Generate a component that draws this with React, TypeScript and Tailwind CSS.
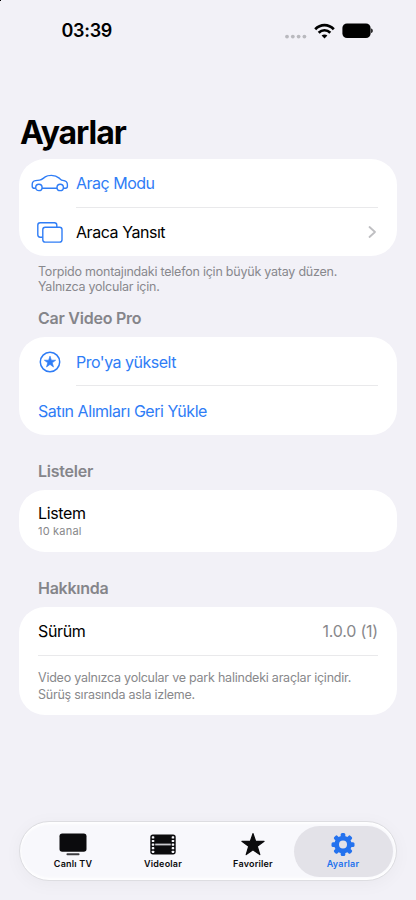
import React, { useState } from 'react';

function CarIcon() {
  return (
    <svg width="38" height="18" viewBox="0 0 38 18" fill="none" stroke="#2f7df6" strokeWidth="1.4" strokeLinejoin="round" strokeLinecap="round">
      <path d="M4.4 14.3H3.4C2 14.3 1.2 13.6 1.2 12.2V10.4C1.2 8.2 2.3 6.9 4.5 6.6L8.6 6.1C11 5.8 12.2 4.2 14.2 2.9C15.6 1.9 17.2 1.4 20.4 1.4C24.6 1.4 26.4 2.6 28.6 4.4C29.6 5.3 30.2 6.2 31.8 6.4C35 6.8 36.4 7.9 36.4 10.6V12.3C36.4 13.6 35.7 14.3 34.5 14.3H32.7M25.7 14.3H11.4" />
      <circle cx="7.9" cy="13.4" r="3.2" />
      <circle cx="29.2" cy="13.4" r="3.2" />
    </svg>
  );
}

function MirrorIcon() {
  return (
    <svg width="26" height="21" viewBox="0 0 26 21" fill="none" stroke="#2f7df6" strokeWidth="1.4">
      <path d="M5.7 15.2H3.2C1.7 15.2 .8 14.3 .8 12.8V3.2C.8 1.7 1.7 .8 3.2 .8H17.4C18.9 .8 19.8 1.7 19.8 3.2V5.2" />
      <rect x="5.8" y="5.2" width="19.2" height="14.9" rx="2.4" />
    </svg>
  );
}

function StarCircleIcon() {
  return (
    <svg width="22" height="22" viewBox="0 0 22 22">
      <circle cx="11" cy="11" r="9.7" fill="none" stroke="#2f7df6" strokeWidth="1.5" />
      <path d="M11 5.1L12.4 9.2H16.7L13.3 11.8L14.5 16L11 13.5L7.5 16L8.7 11.8L5.3 9.2H9.6Z" fill="#2f7df6" stroke="#2f7df6" strokeWidth=".6" strokeLinejoin="round" />
    </svg>
  );
}

function TvIcon() {
  return (
    <svg width="28" height="24" viewBox="0 0 28 24" fill="#0b0b0d">
      <rect x=".5" y=".5" width="27" height="18.3" rx="2.8" />
      <rect x="7.5" y="20.3" width="13" height="2" rx=".8" fill="#3c3c40" />
    </svg>
  );
}

function FilmIcon() {
  return (
    <svg width="26" height="24" viewBox="0 0 26 24">
      <rect x=".3" y="1.4" width="25.4" height="20" rx="2.6" fill="#0b0b0d" />
      <rect x="5.2" y="10.6" width="15.6" height="1.8" fill="#c9c9ce" />
      {[3.3, 6.9, 10.5, 14.1, 17.7].map(y => (
        <g key={y} fill="#f7f7fb">
          <rect x="1.8" y={y} width="2.5" height="2.2" rx=".6" />
          <rect x="21.7" y={y} width="2.5" height="2.2" rx=".6" />
        </g>
      ))}
    </svg>
  );
}

function StarIcon() {
  return (
    <svg width="26" height="24" viewBox="0 0 26 24">
      <path d="M13 .6L15.6 8.3H24.1L17.3 13.3L19.8 21.6L13 16.8L6.2 21.6L8.7 13.3L1.9 8.3H10.4Z" fill="#0b0b0d" stroke="#0b0b0d" strokeWidth="1.2" strokeLinejoin="round" />
    </svg>
  );
}

function GearIcon() {
  return (
    <svg width="24" height="24" viewBox="0 0 24 24">
      <circle cx="12" cy="11.6" r="6.4" fill="none" stroke="#2472ee" strokeWidth="4.8" />
      {[0, 45, 90, 135, 180, 225, 270, 315].map(a => (
        <rect key={a} x="9.7" y=".1" width="4.6" height="5" rx="1.5" fill="#2472ee" transform={`rotate(${a} 12 11.6)`} />
      ))}
    </svg>
  );
}

function StatusBar() {
  return (
    <div className="relative flex h-[61px] items-center justify-between pl-[61.5px] pr-[43.5px]">
      <div className="absolute left-0 top-0 h-px w-px bg-black" />
      <span className="text-[18px] font-semibold leading-none tracking-[-0.3px]">03:39</span>
      <div className="flex items-center">
        <svg width="22" height="16" viewBox="0 0 22 16" fill="#b9b9be">
          {[2, 7.8, 13.6, 19.4].map(x => <circle key={x} cx={x} cy="13.6" r="1.9" />)}
        </svg>
        <svg className="ml-[7px]" width="21" height="16" viewBox="0 0 21 16" fill="none" stroke="#000" strokeWidth="2.7">
          <path d="M1.2 6.2C6.5 .7 14.5 .7 19.8 6.2" />
          <path d="M4.7 9.7C8 6.4 13 6.4 16.3 9.7" />
          <path d="M10.5 15.4L7.6 12.5C9.3 11 11.7 11 13.4 12.5Z" fill="#000" stroke="none" />
        </svg>
        <svg className="ml-[7px]" width="31" height="16" viewBox="0 0 31 16">
          <rect x=".4" y=".5" width="28.2" height="14.6" rx="4.6" />
          <path d="M29.2 5.6C31.2 6.2 31.2 9.5 29.2 10.1Z" />
        </svg>
      </div>
    </div>
  );
}

function SectionTitle({ children, className }: { children: React.ReactNode; className: string }) {
  return (
    <h2 className={`pl-[19px] text-[16px] font-semibold leading-5 tracking-[-0.25px] text-[#85858a] ${className}`}>{children}</h2>
  );
}

function Card({ children }: { children: React.ReactNode }) {
  return <div className="overflow-hidden rounded-[26px] bg-white">{children}</div>;
}

const tabs = [
  { label: 'Canlı TV', icon: TvIcon },
  { label: 'Videolar', icon: FilmIcon },
  { label: 'Favoriler', icon: StarIcon },
  { label: 'Ayarlar', icon: GearIcon },
];

export default function App() {
  const [activeTab, setActiveTab] = useState('Ayarlar');

  return (
    <div className="flex h-[900px] w-[416px] flex-col overflow-hidden bg-[#f2f1f7] font-['Inter','Liberation_Sans',sans-serif] text-black">
      <StatusBar />

      <main className="flex-1 pl-[19px] pr-[19px] pt-[52px]">
        <h1 className="h-[46px] pl-px text-[32px] font-bold leading-[39px] tracking-[-1.05px]">Ayarlar</h1>

        <Card>
          <button className="flex h-12 w-full items-center text-left">
            <span className="flex w-[57px] items-center pl-[11.5px]"><CarIcon /></span>
            <span className="text-[16px] tracking-[-0.5px] text-[#2f7df6]">Araç Modu</span>
          </button>
          <div className="ml-[57px] mr-[19px] h-px bg-[#e9e9eb]" />
          <button className="flex h-12 w-full items-center text-left">
            <span className="flex w-[57px] items-center pl-[17.5px]"><MirrorIcon /></span>
            <span className="flex-1 text-[16px] tracking-[-0.45px]">Araca Yansıt</span>
            <svg className="mr-[20px]" width="9" height="14" viewBox="0 0 9 14" fill="none" stroke="#bfbfc2" strokeWidth="1.8" strokeLinecap="round" strokeLinejoin="round">
              <path d="M1.5 2L7 7L1.5 12" />
            </svg>
          </button>
        </Card>
        <p className="mt-[8px] pl-[19px] text-[12.5px] leading-[15px] tracking-[-0.23px] text-[#88888d]">
          Torpido montajındaki telefon için büyük yatay düzen.
          <br />
          Yalnızca yolcular için.
        </p>

        <SectionTitle className="mt-[14px]">Car Video Pro</SectionTitle>
        <div className="h-[9px]" />
        <Card>
          <button className="flex h-12 w-full items-center pt-px text-left">
            <span className="flex w-[57px] items-center pl-[19.5px]"><StarCircleIcon /></span>
            <span className="text-[16px] tracking-[-0.5px] text-[#2f7df6]">Pro'ya yükselt</span>
          </button>
          <div className="ml-[57px] mr-[19px] h-px bg-[#e9e9eb]" />
          <button className="flex h-[49px] w-full items-center pl-[19px] text-left text-[16px] tracking-[-0.45px] text-[#2f7df6]">
            Satın Alımları Geri Yükle
          </button>
        </Card>

        <SectionTitle className="mt-[26px]">Listeler</SectionTitle>
        <div className="h-[9px]" />
        <Card>
          <div className="h-[62px] pl-[19px] pt-[13px]">
            <div className="text-[16px] leading-5 tracking-[-0.35px]">Listem</div>
            <div className="text-[11px] leading-4 tracking-[0.2px] text-[#88888b]">10 kanal</div>
          </div>
        </Card>

        <SectionTitle className="mt-[26px]">Hakkında</SectionTitle>
        <div className="h-[9px]" />
        <Card>
          <div className="flex h-12 items-center justify-between px-[19px] text-[16px] tracking-[-0.35px]">
            <span>Sürüm</span>
            <span className="tracking-[-0.2px] text-[#88888b]">1.0.0 (1)</span>
          </div>
          <div className="mx-[19px] h-px bg-[#e9e9eb]" />
          <p className="h-[59px] pl-[19px] pt-[13px] text-[12.5px] leading-[17px] tracking-[-0.23px] text-[#88888b]">
            Video yalnızca yolcular ve park halindeki araçlar içindir.
            <br />
            Sürüş sırasında asla izleme.
          </p>
        </Card>
      </main>

      <nav className="mx-[19px] mb-[19px] flex h-[60px] items-center rounded-full border border-[#dddde1] bg-[#f8f8fc] px-[3.5px] shadow-[0_3px_18px_rgba(0,0,0,0.04),inset_0_2px_3px_#fff,inset_0_-2px_3px_#fff]">
        {tabs.map(({ label, icon: Icon }) => (
          <button
            key={label}
            onClick={() => setActiveTab(label)}
            className={`-mr-[9px] flex h-[51px] w-[99px] shrink-0 flex-col items-center rounded-full pt-[7px] ${
              activeTab === label ? 'bg-[#e3e2e8] text-[#2472ee]' : 'text-[#0b0b0d]'
            }`}
          >
            <Icon />
            <span className="mt-[1.5px] text-[9px] font-semibold leading-3 tracking-[0.2px]">{label}</span>
          </button>
        ))}
      </nav>
    </div>
  );
}
